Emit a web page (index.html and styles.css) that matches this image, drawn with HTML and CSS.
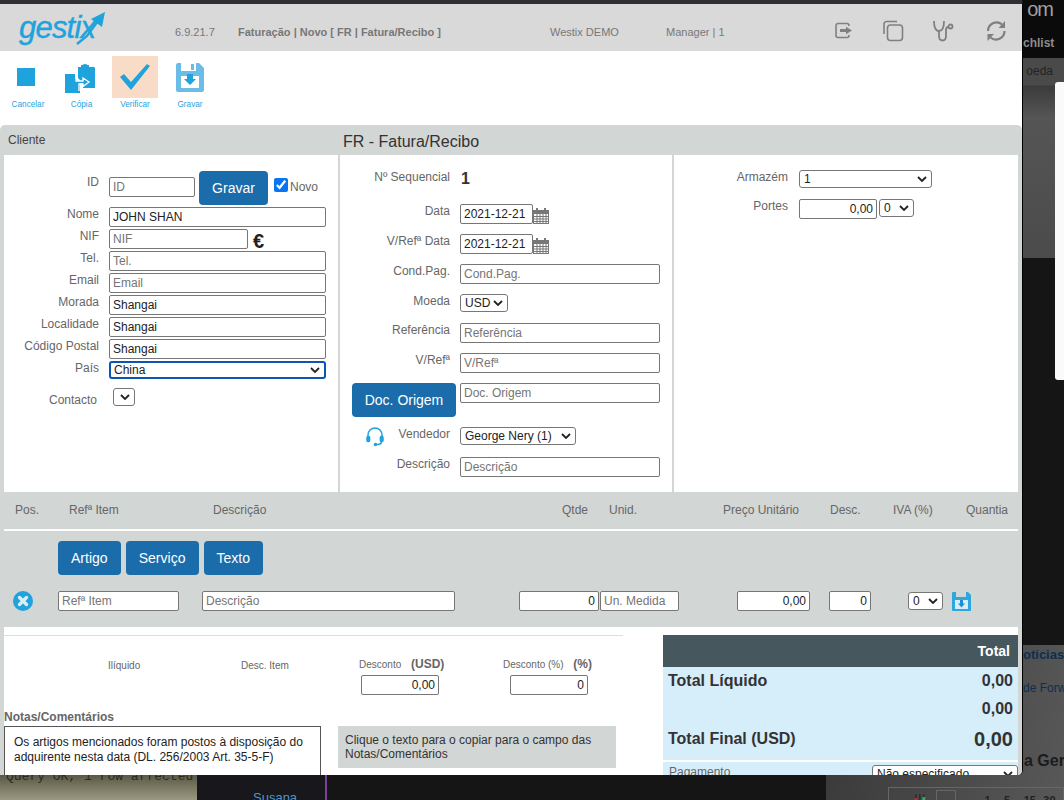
FILE: index.html
```html
<!DOCTYPE html>
<html lang="en">
<head>
  <meta charset="UTF-8" />
  <title>Gestix</title>
  <link rel="stylesheet" href="styles.css">
</head>
<body>
  <!-- what shows behind the modal -->
  <div class="bg-topstrip"></div>
  <div class="bg-right-dark">
    <span class="bg-com">om</span>
    <span class="bg-watch">chlist</span>
  </div>
  <div class="bg-right-grey"><span class="bg-moeda">oeda</span></div>
  <div class="bg-right-card"></div>
  <div class="bg-right-low">
    <span class="bg-noticias">oticias</span>
    <span class="bg-forw">de Forw</span>
    <span class="bg-ger">a Ger</span>
    <div class="bg-pager">
      <svg width="14" height="13" viewBox="0 0 14 13"><path d="M3 0 V13 M7 0 V13 M11 0 V13" stroke="#222"/><rect x="1.5" y="4" width="3" height="6" fill="#a33"/><rect x="9.5" y="3" width="3" height="6" fill="#3a6"/></svg>
      <span class="bg-pager-drop"></span>
      <span class="bg-pager-num">1</span>
      <span class="bg-pager-num">5</span>
      <span class="bg-pager-num">15</span>
      <span class="bg-pager-num">30</span>
    </div>
  </div>
  <div class="bg-terminal"><span>Query OK, 1 row affected</span></div>
  <div class="bg-sidebar"><span class="bg-susana">Susana</span></div>

  <div class="window">
    <header class="topbar">
      <div class="logo">
        <span class="logo-text">gestix</span>
        <svg class="logo-arrow" width="30" height="34" viewBox="0 0 30 34">
          <path d="M2 32 L12 24 L23 9" fill="none" stroke="#1fa3dc" stroke-width="2.4"/>
          <path d="M16 7 L30 0 L27 15 Z" fill="#1fa3dc"/>
        </svg>
      </div>
      <span class="tb-version">6.9.21.7</span>
      <span class="tb-title">Faturação | Novo [ FR | Fatura/Recibo ]</span>
      <span class="tb-company">Westix DEMO</span>
      <span class="tb-user">Manager | 1</span>
      <div class="tb-icons">
        <svg width="20" height="20" viewBox="0 0 20 20" fill="none" stroke="#808080" stroke-width="1.6">
          <path d="M15 5 V4.5 A2 2 0 0 0 13 2.5 H4 A2 2 0 0 0 2 4.5 V14.5 A2 2 0 0 0 4 16.5 H13 A2 2 0 0 0 15 14.5 V14"/>
          <path d="M6 8 H12 V5.8 L18 9.5 L12 13.2 V11 H6 Z" fill="#808080" stroke="none"/>
        </svg>
        <svg width="22" height="22" viewBox="0 0 22 22" fill="none" stroke="#808080" stroke-width="1.6">
          <path d="M2 14 V4 A2.5 2.5 0 0 1 4.5 1.5 H15"/>
          <rect x="5.5" y="5" width="15" height="15.5" rx="3"/>
        </svg>
        <svg width="22" height="22" viewBox="0 0 22 22" fill="none" stroke="#808080" stroke-width="1.8">
          <path d="M2 1 C2 6 3 11 7 11 C11 11 12 6 12 1"/>
          <path d="M7 11 V16 C7 19 8.5 20.5 10.5 20.5 C13 20.5 14 18.5 14 16 V10 C14 8 15 7 16.5 7"/>
          <circle cx="18.5" cy="6.5" r="2"/>
        </svg>
        <svg class="tb-refresh" width="22" height="22" viewBox="0 0 22 22" fill="none" stroke="#808080" stroke-width="2.2">
          <path d="M3 11 A8.5 8.5 0 0 1 17 4.5"/>
          <path d="M19.5 11 A8.5 8.5 0 0 1 5.5 17.5"/>
          <path d="M20 1 V8 H13.5 Z" fill="#808080" stroke="none"/>
          <path d="M2.5 21 V14 H9 Z" fill="#808080" stroke="none"/>
        </svg>
      </div>
    </header>

    <nav class="toolbar">
      <div class="tool tool-first">
        <span class="tool-icon"><span class="stop-square"></span></span>
        <span class="tool-label">Cancelar</span>
      </div>
      <div class="tool tool-copy">
        <span class="tool-icon">
          <svg width="32" height="32" viewBox="0 0 32 32">
            <path d="M14 6 H18 A3 3 0 0 1 24 6 H28 A2 2 0 0 1 31 8 V27 H19 V22 H14 Z" fill="#1fa3dd"/>
            <rect x="17" y="4" width="8" height="4" fill="#1fa3dd"/>
            <path d="M1 13 H11 V17 L16 22 V32 H1 Z" fill="#1fa3dd"/>
            <path d="M12 16 L16 20 H19 V17 L25 21 L19 25.5 V23 H15 V30 M12 16 V20 H16" fill="none" stroke="#fff" stroke-width="1.3"/>
          </svg>
        </span>
        <span class="tool-label">Cópia</span>
      </div>
      <div class="tool">
        <span class="tool-icon tool-on">
          <svg width="32" height="28" viewBox="0 0 32 28">
            <path d="M1 14 L5 11 L12 19 L28 1 L31 3 L12 27 Z" fill="#1fa3dd"/>
          </svg>
        </span>
        <span class="tool-label">Verificar</span>
      </div>
      <div class="tool">
        <span class="tool-icon">
          <svg width="28" height="29" viewBox="0 0 28 29">
            <path d="M2 0 H23 L28 5 V27 A2 2 0 0 1 26 29 H2 A2 2 0 0 1 0 27 V2 A2 2 0 0 1 2 0 Z" fill="#6bbde8"/>
            <rect x="5" y="0" width="15" height="8" fill="#fff"/>
            <rect x="15" y="1" width="3" height="6" fill="#6bbde8"/>
            <rect x="5" y="13" width="18" height="12" fill="#fff"/>
            <path d="M11 11 H17 V16 H20 L14 22 L8 16 H11 Z" fill="#1fa3dd"/>
          </svg>
        </span>
        <span class="tool-label">Gravar</span>
      </div>
    </nav>

    <main class="panel">
      <div class="panel-head">
        <span class="panel-client">Cliente</span>
        <span class="panel-title">FR - Fatura/Recibo</span>
      </div>

      <section class="form-cols">
        <div class="col col-client">
          <div class="row row-id">
            <label class="lbl">ID</label>
            <input class="inp w-id" placeholder="ID">
            <button class="btn btn-save">Gravar</button>
            <input class="check" type="checkbox" checked>
            <span class="novo">Novo</span>
          </div>
          <div class="row"><label class="lbl">Nome</label><input class="inp w-full" value="JOHN SHAN"></div>
          <div class="row"><label class="lbl">NIF</label><input class="inp w-nif" placeholder="NIF"><span class="euro">€</span></div>
          <div class="row"><label class="lbl">Tel.</label><input class="inp w-full" placeholder="Tel."></div>
          <div class="row"><label class="lbl">Email</label><input class="inp w-full" placeholder="Email"></div>
          <div class="row"><label class="lbl">Morada</label><input class="inp w-full" value="Shangai"></div>
          <div class="row"><label class="lbl">Localidade</label><input class="inp w-full" value="Shangai"></div>
          <div class="row"><label class="lbl">Código Postal</label><input class="inp w-full" value="Shangai"></div>
          <div class="row"><label class="lbl">País</label><select class="sel sel-focus w-full"><option>China</option></select></div>
          <div class="row row-contact"><label class="lbl">Contacto</label><select class="sel w-contact"><option></option></select></div>
        </div>

        <div class="col col-doc">
          <div class="field field-seq"><label class="lbl">Nº Sequencial</label><span class="seq">1</span></div>
          <div class="field">
            <label class="lbl">Data</label><input class="inp w-date" value="2021-12-21">
            <svg class="cal" width="16" height="16" viewBox="0 0 16 16"><path d="M0 2 H3 V0 H5 V2 H11 V0 H13 V2 H16 V16 H0 Z" fill="#777"/><path d="M1 6 H15 V15 H1 Z" fill="#fff"/><path d="M1 8.5 H15 M1 11 H15 M1 13.5 H15 M4 6 V15 M7 6 V15 M10 6 V15 M13 6 V15" stroke="#777" stroke-width="1"/></svg>
          </div>
          <div class="field">
            <label class="lbl">V/Refª Data</label><input class="inp w-date" value="2021-12-21">
            <svg class="cal" width="16" height="16" viewBox="0 0 16 16"><path d="M0 2 H3 V0 H5 V2 H11 V0 H13 V2 H16 V16 H0 Z" fill="#777"/><path d="M1 6 H15 V15 H1 Z" fill="#fff"/><path d="M1 8.5 H15 M1 11 H15 M1 13.5 H15 M4 6 V15 M7 6 V15 M10 6 V15 M13 6 V15" stroke="#777" stroke-width="1"/></svg>
          </div>
          <div class="field"><label class="lbl">Cond.Pag.</label><input class="inp w-doc" placeholder="Cond.Pag."></div>
          <div class="field field-short"><label class="lbl">Moeda</label><select class="sel w-cur"><option>USD</option></select></div>
          <div class="field"><label class="lbl">Referência</label><input class="inp w-doc" placeholder="Referência"></div>
          <div class="field"><label class="lbl">V/Refª</label><input class="inp w-doc" placeholder="V/Refª"></div>
          <div class="field field-origin">
            <button class="btn btn-origin">Doc. Origem</button>
            <input class="inp w-doc" placeholder="Doc. Origem">
          </div>
          <div class="field">
            <label class="lbl lbl-icon">
              <svg width="18" height="20" viewBox="0 0 18 20" fill="none" stroke="#1fa3dd" stroke-width="1.5">
                <path d="M2 11 V8 A7 7 0 0 1 16 8 V11"/>
                <rect x="1" y="9.5" width="2.6" height="5" rx="1" fill="#1fa3dd"/>
                <rect x="14.4" y="9.5" width="2.6" height="5" rx="1" fill="#1fa3dd"/>
                <path d="M15.5 15 C15 17 13 17.6 10.5 17.6"/>
                <circle cx="9.5" cy="17.6" r="1" fill="#1fa3dd"/>
              </svg>
              <span>Vendedor</span>
            </label>
            <select class="sel w-seller"><option>George Nery (1)</option></select>
          </div>
          <div class="field"><label class="lbl">Descrição</label><input class="inp w-doc" placeholder="Descrição"></div>
        </div>

        <div class="col col-store">
          <div class="store-row"><label class="lbl">Armazém</label><select class="sel w-store"><option>1</option></select></div>
          <div class="store-row">
            <label class="lbl">Portes</label>
            <input class="inp inp-num w-portes" value="0,00">
            <select class="sel w-portes-sel"><option>0</option></select>
          </div>
        </div>
      </section>

      <div class="lines-head">
        <span>Pos.</span>
        <span>Refª Item</span>
        <span>Descrição</span>
        <span class="ta-right">Qtde</span>
        <span class="pad-unit">Unid.</span>
        <span class="ta-right">Preço Unitário</span>
        <span class="pad-disc">Desc.</span>
        <span>IVA (%)</span>
        <span>Quantia</span>
      </div>

      <section class="lines">
        <div class="line-btns">
          <button class="btn btn-line">Artigo</button>
          <button class="btn btn-line">Serviço</button>
          <button class="btn btn-line">Texto</button>
        </div>
        <div class="line-row">
          <svg width="20" height="20" viewBox="0 0 20 20">
            <circle cx="10" cy="10" r="10" fill="#1fa3dd"/>
            <path d="M6.5 6.5 L13.5 13.5 M13.5 6.5 L6.5 13.5" stroke="#d9eef8" stroke-width="3.4" stroke-linecap="round"/>
          </svg>
          <input class="inp w-ref" placeholder="Refª Item">
          <input class="inp w-desc" placeholder="Descrição">
          <input class="inp inp-num w-qty" value="0">
          <input class="inp w-unit" placeholder="Un. Medida">
          <input class="inp inp-num w-price" value="0,00">
          <input class="inp inp-num w-disc" value="0">
          <select class="sel w-iva"><option>0</option></select>
          <svg width="19" height="19" viewBox="0 0 19 19">
            <path d="M1 0 H16 L19 3 V18 A1 1 0 0 1 18 19 H1 A1 1 0 0 1 0 18 V1 A1 1 0 0 1 1 0 Z" fill="#2ea6e0"/>
            <rect x="4" y="0" width="10" height="5" fill="#d2d6d5"/>
            <rect x="3" y="8" width="13" height="9" fill="#d6edfa"/>
            <path d="M8 8 H11 V11.5 H13 L9.5 15.5 L6 11.5 H8 Z" fill="#1f8fcf"/>
          </svg>
        </div>
      </section>

      <section class="bottom">
        <div class="bottom-left">
          <div class="sums">
            <span class="sum-lbl">Ilíquido</span>
            <span class="sum-lbl">Desc. Item</span>
            <span class="sum-lbl">Desconto <b class="sum-unit">(USD)</b></span>
            <span class="sum-lbl">Desconto (%) <b class="sum-unit">(%)</b></span>
            <span></span>
            <span></span>
            <input class="inp inp-num w-sum sum-usd" value="0,00">
            <input class="inp inp-num w-sum sum-pct" value="0">
          </div>
          <div class="notes-title">Notas/Comentários</div>
          <div class="notes">
            <div class="notes-box">Os artigos mencionados foram postos à disposição do adquirente nesta data (DL. 256/2003 Art. 35-5-F)</div>
            <div class="notes-hint">Clique o texto para o copiar para o campo das Notas/Comentários</div>
          </div>
        </div>

        <div class="totals">
          <div class="totals-head">Total</div>
          <div class="totals-row"><span>Total Líquido</span><span>0,00</span></div>
          <div class="totals-row"><span></span><span>0,00</span></div>
          <div class="totals-row totals-final"><span>Total Final (USD)</span><span class="final-val">0,00</span></div>
          <div class="totals-pay">
            <span>Pagamento</span>
            <select class="sel w-pay"><option>Não especificado</option></select>
          </div>
        </div>
      </section>
    </main>
  </div>
</body>
</html>
```

FILE: styles.css
```css
* {
  box-sizing: border-box;
}

html, body {
  margin: 0;
  padding: 0;
}

body {
  position: relative;
  width: 1064px;
  height: 800px;
  overflow: hidden;
  background: #151515;
  font-family: "Liberation Sans", Arial, sans-serif;
  font-size: 12px;
  color: #666;
}

/* behind the modal */
.bg-topstrip {
  position: absolute;
  left: 0;
  top: 0;
  width: 1022px;
  height: 4px;
  background: #2f3033;
}

.bg-right-dark {
  position: absolute;
  left: 1023px;
  top: 0;
  width: 41px;
  height: 58px;
  background: #0b0b0b;
}

.bg-com {
  position: absolute;
  right: 11px;
  top: -2px;
  font-size: 20px;
  letter-spacing: -1px;
  color: #a0a0a0;
}

.bg-watch {
  position: absolute;
  left: 0;
  top: 36px;
  font-size: 12px;
  font-weight: bold;
  color: #8c8c8c;
}

.bg-right-grey {
  position: absolute;
  left: 1023px;
  top: 58px;
  width: 41px;
  height: 200px;
  background: linear-gradient(#4a4a4a 0, #4a4a4a 27px, #3b3b3b 28px, #555 60px, #4b4b4b 100%);
}

.bg-moeda {
  position: absolute;
  right: 11px;
  top: 6px;
  color: #222;
}

.bg-right-card {
  position: absolute;
  left: 1055px;
  top: 82px;
  width: 9px;
  height: 298px;
  background: #fafafa;
  border-radius: 3px 0 0 3px;
}

.bg-right-low {
  position: absolute;
  left: 826px;
  top: 645px;
  width: 238px;
  height: 155px;
  background: linear-gradient(100deg, #383838, #585858);
}

.bg-noticias {
  position: absolute;
  left: 197px;
  top: 2px;
  font-size: 13px;
  font-weight: bold;
  color: #0d2f4f;
}

.bg-forw {
  position: absolute;
  left: 197px;
  top: 36px;
  color: #0d2f4f;
  white-space: nowrap;
}

.bg-ger {
  position: absolute;
  left: 198px;
  top: 107px;
  font-size: 16px;
  font-weight: bold;
  color: #1c1c1c;
  white-space: nowrap;
}

.bg-pager {
  display: flex;
  align-items: center;
  position: absolute;
  left: 62px;
  top: 142px;
  width: 176px;
  height: 26px;
  padding-left: 24px;
  border: 1px solid #666;
  font-size: 11px;
  font-weight: bold;
  color: #222;
}

.bg-pager-drop {
  width: 21px;
  height: 20px;
  margin: 0 28px 0 9px;
  border: 1px solid #666;
}

.bg-pager-num {
  width: 20px;
}

.bg-terminal {
  position: absolute;
  left: 0;
  top: 769px;
  width: 197px;
  height: 31px;
  background: linear-gradient(#4c4a38, #9a9880);
  overflow: hidden;
  font-family: "Liberation Mono", monospace;
  font-size: 13px;
  color: #2a2a20;
}

.bg-terminal span {
  display: block;
  margin: 0 0 0 6px;
  white-space: nowrap;
}

.bg-sidebar {
  position: absolute;
  left: 197px;
  top: 770px;
  width: 130px;
  height: 30px;
  background: #17171c;
  border-right: 2px solid #7b3fa0;
}

.bg-susana {
  position: absolute;
  left: 56px;
  top: 20px;
  font-size: 13px;
  color: #4f95c9;
}

/* modal */
.window {
  position: absolute;
  left: 0;
  top: 4px;
  width: 1023px;
  height: 771px;
  background: #fff;
  border-right: 1px solid #000;
  border-radius: 0 0 5px 0;
  overflow: hidden;
}

.topbar {
  display: flex;
  align-items: center;
  height: 47px;
  padding: 8px 0 0 19px;
  background: #d9d9d9;
  font-size: 11px;
  color: #777;
}

.logo {
  position: relative;
  width: 156px;
  height: 38px;
  margin-top: -8px;
}

.logo-text {
  font-size: 31px;
  font-style: italic;
  letter-spacing: -0.8px;
  line-height: 38px;
  color: #1fa3dc;
  -webkit-text-stroke: 0.4px #1fa3dc;
}

.logo-arrow {
  position: absolute;
  left: 56px;
  top: 3px;
}

.tb-version {
  width: 63px;
}

.tb-title {
  width: 312px;
  font-weight: bold;
}

.tb-company {
  width: 116px;
}

.tb-user {
  width: 168px;
}

.tb-icons {
  display: flex;
  align-items: center;
  gap: 28px;
  margin-top: -1px;
}

.tb-refresh {
  margin-left: 3px;
}

.toolbar {
  display: flex;
  gap: 9px;
  height: 74px;
  padding: 5px 0 0 2px;
}

.tool {
  display: flex;
  flex-direction: column;
  align-items: center;
  width: 46px;
}

.tool-icon {
  display: flex;
  align-items: center;
  justify-content: center;
  width: 46px;
  height: 42px;
  flex: none;
}

.tool-on {
  background: #f9dcc7;
}

.stop-square {
  width: 18px;
  height: 18px;
  margin-left: 1px;
  background: #1fa3dd;
}

.tool-label {
  margin-top: 1px;
  font-size: 8.2px;
  line-height: 11px;
  color: #1fa3dd;
  white-space: nowrap;
}

.tool-first .tool-label {
  margin-left: 6px;
}

.tool-copy .tool-label {
  margin-left: 3px;
}

.panel {
  height: 650px;
  padding: 0 4px;
  background: #d2d6d5;
  border-radius: 5px 5px 0 0;
}

.panel-head {
  display: flex;
  align-items: center;
  height: 30px;
}

.panel-client {
  width: 339px;
  padding-left: 4px;
  color: #444;
}

.panel-title {
  padding-top: 4px;
  font-size: 16px;
  color: #333;
}

.form-cols {
  display: grid;
  grid-template-columns: 334px 332px 344px;
  gap: 2px;
  height: 337px;
}

.col {
  background: #fff;
}

.col-client {
  padding-top: 16px;
}

.row {
  display: flex;
  align-items: flex-start;
  gap: 10px;
  height: 22px;
}

.lbl {
  flex: none;
  width: 95px;
  line-height: 14px;
  text-align: right;
}

.row-id {
  height: 36px;
}

.row-id .lbl {
  padding-top: 4px;
}

.row-id .inp {
  margin-top: 6px;
}

.btn {
  border: none;
  border-radius: 4px;
  background: #1b6cab;
  color: #fff;
  font-family: inherit;
  font-size: 14px;
  padding: 0;
}

.btn-save {
  width: 69px;
  height: 34px;
  margin-left: -6px;
}

.check {
  width: 14px;
  height: 14px;
  margin: 7px -8px 0 -4px;
  accent-color: #0a75f0;
}

.novo {
  margin-top: 9px;
  line-height: 14px;
}

.euro {
  margin: 1px 0 0 -5px;
  font-size: 20px;
  line-height: 22px;
  font-weight: bold;
  color: #222;
}

.row-contact {
  margin-top: 5px;
}

.row-contact .lbl {
  padding: 5px 2px 0 0;
}

.inp {
  height: 20px;
  padding: 0 3px;
  border: 1px solid #767676;
  border-radius: 2px;
  background: #fff;
  font-family: inherit;
  font-size: 12px;
  color: #222;
}

.inp::placeholder {
  color: #757575;
}

.inp-num {
  text-align: right;
}

.sel {
  height: 18px;
  padding: 0 14px 0 4px;
  border: 1px solid #767676;
  border-radius: 3px;
  background-color: #fff;
  background-image: url("data:image/svg+xml,%3Csvg xmlns='http://www.w3.org/2000/svg' width='10' height='6'%3E%3Cpath d='M1 1 L5 5 L9 1' fill='none' stroke='%23222' stroke-width='1.8'/%3E%3C/svg%3E");
  background-repeat: no-repeat;
  background-position: right 4px center;
  appearance: none;
  font-family: inherit;
  font-size: 12px;
  color: #222;
}

.sel-focus {
  border: 2px solid #0b56b3;
  padding-left: 3px;
}

.w-full { width: 217px; }
.w-id { width: 86px; }
.w-nif { width: 139px; }
.w-contact { width: 22px; margin-left: 4px; }
.w-date { width: 73px; }
.w-doc { width: 200px; }
.w-cur { width: 48px; }
.w-seller { width: 116px; }
.w-store { width: 133px; }
.w-portes { width: 78px; }
.w-portes-sel { width: 35px; }
.w-ref { width: 121px; }
.w-desc { width: 253px; }
.w-qty { width: 80px; }
.w-unit { width: 79px; }
.w-price { width: 73px; }
.w-disc { width: 42px; }
.w-iva { width: 35px; }
.w-sum { width: 78px; }
.w-pay { width: 146px; }

.col-doc {
  padding-top: 15px;
}

.field {
  display: flex;
  align-items: flex-start;
  gap: 10px;
  height: 30px;
}

.field .lbl {
  width: 110px;
}

.field-seq {
  height: 34px;
}

.field-short {
  height: 29px;
}

.seq {
  margin-left: 1px;
  font-size: 16px;
  line-height: 16px;
  padding-top: 1px;
  font-weight: bold;
  color: #333;
}

.cal {
  margin: 4px 0 0 -10px;
}

.field-origin {
  height: 44px;
  gap: 4px;
}

.btn-origin {
  width: 104px;
  height: 34px;
  margin-left: 12px;
}

.field .lbl-icon {
  display: flex;
  justify-content: space-between;
  padding-left: 26px;
}

.col-store {
  padding-top: 15px;
}

.store-row {
  display: flex;
  align-items: flex-start;
  gap: 2px;
  height: 29px;
}

.store-row .lbl {
  width: 114px;
  margin-right: 9px;
}

.lines-head {
  display: grid;
  grid-template-columns: 54px 144px 305px 70px 111px 100px 94px 73px 42px;
  align-items: center;
  height: 37px;
  padding: 0 0 2px 11px;
  white-space: nowrap;
}

.ta-right {
  text-align: right;
}

.pad-unit {
  padding-left: 21px;
}

.pad-disc {
  padding-left: 31px;
}

.lines {
  height: 98px;
  padding: 10px 0 0 9px;
  border-top: 2px solid #fff;
}

.line-btns {
  display: flex;
  gap: 5px;
  margin-left: 45px;
}

.btn-line {
  height: 34px;
  padding: 0 13px;
}

.btn-line:nth-child(2) {
  width: 73px;
  padding: 0;
}

.line-row {
  display: grid;
  grid-template-columns: 45px 144px 317px 81px 137px 92px 79px 44px 20px;
  align-items: center;
  margin-top: 16px;
}

.bottom {
  display: flex;
  gap: 40px;
  height: 148px;
  padding-top: 8px;
  background: #fff;
}

.bottom-left {
  width: 619px;
  border-top: 1px solid #ddd;
}

.sums {
  display: grid;
  grid-template-columns: 133px 118px 144px 115px;
  grid-auto-rows: auto;
  align-items: end;
  row-gap: 4px;
  padding: 21px 0 0 104px;
}

.sum-lbl {
  font-size: 10px;
  white-space: nowrap;
}

.sum-unit {
  margin-left: 7px;
  font-size: 12px;
}

.sum-usd {
  margin-left: 2px;
}

.sum-pct {
  margin-left: 7px;
}

.notes-title {
  margin-top: 15px;
  font-weight: bold;
  line-height: 14px;
}

.notes {
  display: flex;
  gap: 17px;
}

.notes-box {
  width: 317px;
  height: 60px;
  margin-top: 2px;
  padding: 8px 7px 8px 9px;
  border: 1px solid #555;
  line-height: 15px;
  color: #222;
}

.notes-hint {
  width: 278px;
  height: 42px;
  margin-top: 2px;
  padding: 7px 7px;
  background: #d2d6d5;
  line-height: 14px;
  color: #333;
}

.totals {
  width: 355px;
  height: 140px;
  background: #d6edfa;
  overflow: hidden;
}

.totals-head {
  height: 32px;
  padding-right: 8px;
  background: #47575e;
  font-size: 14px;
  font-weight: bold;
  line-height: 32px;
  text-align: right;
  color: #fff;
}

.totals-row {
  display: flex;
  justify-content: space-between;
  align-items: center;
  height: 28px;
  padding: 0 5px;
  font-size: 16px;
  font-weight: bold;
  color: #333;
}

.totals-final {
  height: 37px;
  padding-bottom: 5px;
}

.final-val {
  font-size: 20px;
}

.totals-pay {
  display: flex;
  justify-content: space-between;
  height: 30px;
  padding: 3px 0 0 6px;
  border-top: 2px solid #fff;
}
```
